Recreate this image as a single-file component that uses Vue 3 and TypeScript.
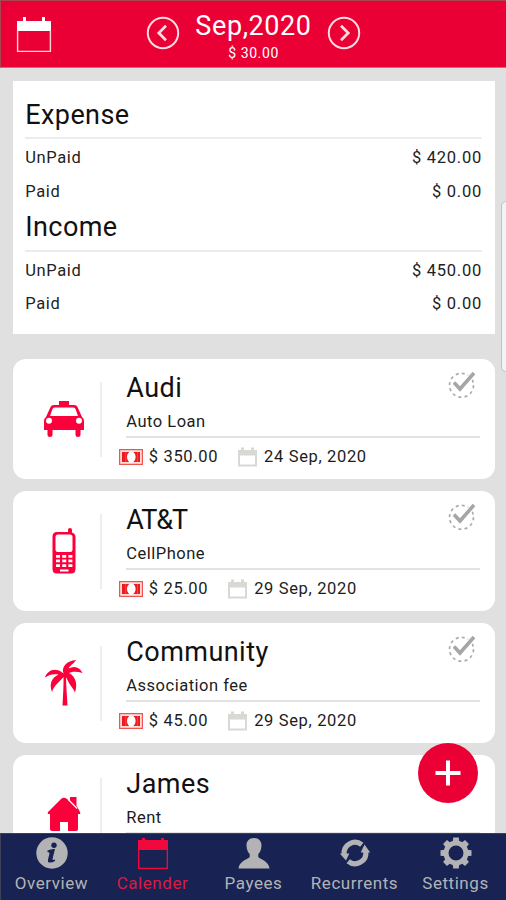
<script setup lang="ts">
interface Bill {
  name: string
  category: string
  amount?: string
  date?: string
  icon: 'taxi' | 'phone' | 'palm' | 'house'
  tight?: boolean
}

interface Section {
  title: string
  rows: { label: string; value: string }[]
}

const sections: Section[] = [
  {
    title: 'Expense',
    rows: [
      { label: 'UnPaid', value: '$ 420.00' },
      { label: 'Paid', value: '$ 0.00' },
    ],
  },
  {
    title: 'Income',
    rows: [
      { label: 'UnPaid', value: '$ 450.00' },
      { label: 'Paid', value: '$ 0.00' },
    ],
  },
]

const bills: Bill[] = [
  { name: 'Audi', category: 'Auto Loan', amount: '$ 350.00', date: '24 Sep, 2020', icon: 'taxi' },
  { name: 'AT&T', category: 'CellPhone', amount: '$ 25.00', date: '29 Sep, 2020', icon: 'phone', tight: true },
  { name: 'Community', category: 'Association fee', amount: '$ 45.00', date: '29 Sep, 2020', icon: 'palm' },
  { name: 'James', category: 'Rent', icon: 'house' },
]

const tabs = ['Overview', 'Calender', 'Payees', 'Recurrents', 'Settings']
const activeTab = 'Calender'
</script>

<template>
  <div class="screen">
    <header class="header">
      <svg class="header-cal" width="36" height="38" viewBox="0 0 36 38">
        <path d="M1 5h34v10H1z" fill="#fff" />
        <path d="M7 1h3v5H7zM26 1h3v5h-3z" fill="#fff" />
        <path d="M1.6 14v21.4h32.8V14" fill="none" stroke="#ffd5dc" stroke-width="1.4" />
      </svg>
      <svg class="arrow" width="34" height="34" viewBox="0 0 34 34">
        <circle cx="17" cy="17" r="15.2" />
        <path d="M20 9.8L12.8 17l7.2 7.2" />
      </svg>
      <div class="month">
        <h1>Sep,2020</h1>
        <p>$ 30.00</p>
      </div>
      <svg class="arrow" width="34" height="34" viewBox="0 0 34 34">
        <circle cx="17" cy="17" r="15.2" />
        <path d="M14 9.8l7.2 7.2-7.2 7.2" />
      </svg>
    </header>

    <main class="content">
      <section class="summary">
        <div v-for="s in sections" :key="s.title" class="group">
          <h2>{{ s.title }}</h2>
          <div v-for="r in s.rows" :key="r.label" class="row">
            <span class="label">{{ r.label }}</span>
            <span class="value">{{ r.value }}</span>
          </div>
        </div>
      </section>

      <article v-for="b in bills" :key="b.name" class="card">
        <div class="pic">
          <svg v-if="b.icon === 'taxi'" width="42" height="38" viewBox="0 0 42 38">
            <path fill-rule="evenodd" d="M16 1h10v4h5.5q2 0 3 2L39 17q2 1.500 2 4v9h-3.500v5q0 2-2.500 2t-2.500-2v-5h-23v5q0 2-2.500 2t-2.500-2v-5H1v-9q0-2.500 2-4L7.500 7q1-2 3-2H16zM11.500 7.500Q10 7.500 9.500 9L7 16h28l-2.500-7q-.5-1.500-2-1.500zM6 17.700a3 3 0 100 6 3 3 0 000-6zM36 17.700a3 3 0 100 6 3 3 0 000-6z" />
          </svg>
          <svg v-else-if="b.icon === 'phone'" width="24" height="48" viewBox="0 0 24 48">
            <path fill-rule="evenodd" d="M16 5V3q0-2 2-2t2 2v2.500q3.500 1 3.500 4.500v32q0 4.500-4.500 4.500H5Q.5 46.500.5 42V9.500Q.5 5 5 5zM6 7.500Q3.500 7.500 3.500 10v12.500q0 2.500 2.500 2.500h12q2.500 0 2.500-2.500V10q0-2.500-2.500-2.500zM4 28v2.700h4V28zm6.200 0v2.700h4V28zm6.200 0v2.700h4V28zM4 32.600v2.700h4v-2.700zm6.200 0v2.700h4v-2.700zm6.200 0v2.700h4v-2.700zM4 37.200v2.700h4v-2.700zm6.200 0v2.700h4v-2.700zm6.200 0v2.700h4v-2.700zM8 42.500v2h8.500v-2z" />
          </svg>
          <svg v-else-if="b.icon === 'palm'" width="38" height="48" viewBox="0 0 38 48">
            <path d="M18.500 14.500C16 8 22 1.500 31 1c-1.500 3-5 4.500-7.500 8.500C29 6.500 35 8 37.500 14c-5-1.800-10-1.700-13.500 0 6.500 3.500 9 11 6 19.500-1.500-4-5.500-7.500-7.500-12.500l-1.500-3c.2 10 1 19 1.500 28.500h-5C18 37 18.700 28 18.500 18c-3 4-9.500 8-11.500 15C4 25 6.500 19 13.500 15.500 9 14.500 4 15.500 0 18.500c2.500-7 10-11 18.500-4z" />
          </svg>
          <svg v-else width="34" height="38" viewBox="0 0 34 38">
            <path d="M23 1h6.500v8.500l3.500 6.500q1 2-1 2h-1v15q0 2-2 2h-8v-9h-8v9H5q-2 0-2-2V18H2q-2 0-1-2L14 3q3-2.500 6 0l3 2.500z" />
            <path d="M21.200 3.500l9 9" fill="none" stroke="#fff" stroke-width="1.300" />
          </svg>
        </div>
        <div class="body">
          <h3 :class="{ tight: b.tight }">{{ b.name }}</h3>
          <p class="category">{{ b.category }}</p>
          <div v-if="b.amount" class="meta">
            <svg width="24" height="16" viewBox="0 0 24 16">
              <rect x=".6" y=".6" width="22.800" height="14.800" fill="#ffdcd8" stroke="#ef5550" stroke-width="1.200" />
              <rect x="3" y="3" width="18" height="10" fill="#e91c22" />
              <ellipse cx="12.300" cy="8" rx="4.300" ry="5.800" fill="#fff" />
              <path d="M6.700 3v10M18.500 3v10" stroke="#fa7770" stroke-width=".5" />
            </svg>
            <span class="amount">{{ b.amount }}</span>
            <svg class="cal" width="21" height="20" viewBox="0 0 21 20">
              <path fill-rule="evenodd" d="M1 3h3V.5h3V3h7V.5h3V3h3v16.500H1zM3 8.500v9h15v-9z" fill="#d8d8d4" />
            </svg>
            <span class="date">{{ b.date }}</span>
          </div>
        </div>
        <svg class="check" width="28" height="28" viewBox="0 0 28 28">
          <circle cx="13.500" cy="15.300" r="12" fill="none" stroke="#aaa" stroke-width="1.700" stroke-dasharray="3 3.280" />
          <path d="M6 12.500l6 6.500L26 3" fill="none" stroke="#fff" stroke-width="6" />
          <path d="M6 12.500l6 6.500L26 3" fill="none" stroke="#a6a6a6" stroke-width="3.600" />
        </svg>
      </article>
    </main>

    <div class="scroll-thumb"></div>
    <button class="fab" aria-label="Add">
      <svg width="26" height="26" viewBox="0 0 26 26"><path d="M13 .5v25M.5 13h25" stroke="#fff" stroke-width="4" /></svg>
    </button>

    <nav class="tabs">
      <a v-for="t in tabs" :key="t" class="tab" :class="{ active: t === activeTab }">
        <svg width="34" height="34" viewBox="0 0 34 34">
          <g v-if="t === 'Overview'">
            <circle cx="17" cy="17" r="15.700" />
            <circle class="cut" cx="19" cy="9.300" r="2.700" />
            <path class="cut" d="M12.500 14.500q4-2 7.500-1.500l-2.500 10q0 1.500 2.500.5v1.500q-3 2-6 1.500-1.500-.5-1-3l1.500-6q.2-1.500-2-1.500z" />
          </g>
          <g v-else-if="t === 'Calender'">
            <path fill-rule="evenodd" d="M2 4h4V2h3v2h16V2h3v2h4v29H2zM3.300 14v17.700h27.400V14z" />
          </g>
          <g v-else-if="t === 'Payees'">
            <path d="M17 2c5 0 7.500 3.200 7.500 7.500 0 4-1.700 7.200-3.200 8.500v3c1 2.200 10.500 3.500 11.200 11.500H1.500c.7-8 10.200-9.300 11.200-11.500v-3c-1.500-1.300-3.200-4.500-3.200-8.500C9.500 5.200 12 2 17 2z" />
          </g>
          <g v-else-if="t === 'Recurrents'">
            <path d="M6.200 18.500A10.800 10.800 0 0 1 23.800 8.800M27.800 15.500A10.800 10.800 0 0 1 10.200 25.200" fill="none" stroke="#b3b3b5" stroke-width="5.200" />
            <path d="M1.800 17.500h9.500L8 24.500zM22.700 16.500h9.500L26.500 8.500z" />
          </g>
          <g v-else>
            <circle cx="17" cy="17" r="10" fill="none" stroke="#b3b3b5" stroke-width="5" />
            <path v-for="n in 8" :key="n" :transform="`rotate(${n * 45} 17 17)`" d="M13.700 6.500L14.200 1.500h5.600l.5 5z" />
          </g>
        </svg>
        <span>{{ t }}</span>
      </a>
    </nav>
  </div>
</template>

<style>
body {
  margin: 0;
}
</style>

<style scoped>
.screen {
  position: relative;
  display: flex;
  flex-direction: column;
  box-sizing: border-box;
  width: 506px;
  height: 900px;
  overflow: hidden;
  background: #e0e0e0;
  font-family: Roboto, "Liberation Sans", sans-serif;
  color: #111;
}
h1, h2, h3, p {
  margin: 0;
  font-weight: 400;
}
.header {
  display: flex;
  flex: none;
  box-sizing: border-box;
  height: 68px;
  padding-left: 15px;
  background: #ea0034;
  border-top: 1px solid #a94550;
  border-left: 1px solid #a94550;
  border-bottom: 1px solid #b7777f;
  color: #fff;
}
.header-cal {
  margin: 15px 94px 0 0;
}
.arrow {
  margin-top: 15px;
  fill: none;
  stroke: #ffdce2;
  stroke-width: 2;
}
.arrow path {
  stroke-width: 2.700;
}
.month {
  width: 147px;
  text-align: center;
  white-space: nowrap;
}
.month h1 {
  padding-top: 9px;
  font-size: 27px;
  line-height: 32px;
  letter-spacing: 0.6px;
}
.month p {
  padding-top: 1px;
  font-size: 14px;
  line-height: 20px;
  letter-spacing: 0.6px;
}
.content {
  flex: 1;
  min-height: 0;
  padding: 13px 11.500px 0 13px;
  overflow: hidden;
}
.summary {
  box-sizing: border-box;
  height: 253px;
  padding: 13.500px 13px 0 12.300px;
  margin-bottom: 25px;
  background: #fff;
}
.group {
  height: 112.500px;
}
.group h2 {
  height: 42.500px;
  border-bottom: 2px solid #ececec;
  margin-bottom: 2px;
  font-size: 27px;
  line-height: 41px;
  letter-spacing: 0.4px;
}
.row {
  display: flex;
  justify-content: space-between;
  font-size: 16.500px;
  line-height: 33.500px;
  letter-spacing: 0.6px;
  color: #222;
}
.value {
  margin-right: -0.5px;
  letter-spacing: 0.75px;
}
.card {
  position: relative;
  display: flex;
  height: 119.500px;
  margin-bottom: 12.500px;
  border-radius: 13px;
  background: #fff;
}
.pic {
  display: flex;
  align-items: center;
  justify-content: center;
  box-sizing: border-box;
  width: 89px;
  height: 75px;
  margin-top: 22.500px;
  padding-left: 15px;
  border-right: 2px solid #eee;
  fill: #fb003b;
}
.body {
  flex: 1;
  padding: 0 14.500px 0 24.300px;
}
.body h3 {
  padding-top: 9px;
  font-size: 27px;
  line-height: 40px;
  letter-spacing: 0.45px;
}
.body .tight {
  letter-spacing: -1px;
}
.category {
  box-sizing: border-box;
  height: 30px;
  padding-top: 1px;
  border-bottom: 2px solid #e3e3e3;
  font-size: 16.500px;
  line-height: 26px;
  letter-spacing: 0.5px;
  color: #1c1c1c;
}
.meta {
  display: flex;
  align-items: center;
  height: 37px;
  margin-left: -7.500px;
  font-size: 16.500px;
  letter-spacing: 0.65px;
  color: #1c1c1c;
}
.amount {
  margin: 0 19px 0 6px;
}
.date {
  margin-left: 6px;
}
.check {
  position: absolute;
  top: 11px;
  right: 18.500px;
}
.scroll-thumb {
  position: absolute;
  top: 201px;
  right: -8px;
  width: 11px;
  height: 169px;
  border: 1px solid #c2c2c2;
  border-radius: 5px;
  background: #f3f3f3;
}
.fab {
  position: absolute;
  top: 743px;
  right: 28px;
  display: flex;
  align-items: center;
  justify-content: center;
  width: 60px;
  height: 60px;
  padding: 0;
  border: 0;
  border-radius: 50%;
  background: #ea0034;
}
.tabs {
  display: grid;
  grid-template-columns: repeat(5, 1fr);
  flex: none;
  box-sizing: border-box;
  height: 67px;
  border-top: 1px solid #3d4059;
  border-left: 1px solid #3d4059;
  background: #182353;
  color: #b3b3b5;
}
.tab {
  display: flex;
  flex-direction: column;
  align-items: center;
  fill: #b3b3b5;
  font-size: 17px;
  line-height: 26px;
  letter-spacing: 0.55px;
}
.tab svg {
  flex: none;
  margin-top: 1.500px;
}
.cut {
  fill: #182353;
}
.active {
  color: #dc1a42;
  fill: #f2083c;
}
</style>
